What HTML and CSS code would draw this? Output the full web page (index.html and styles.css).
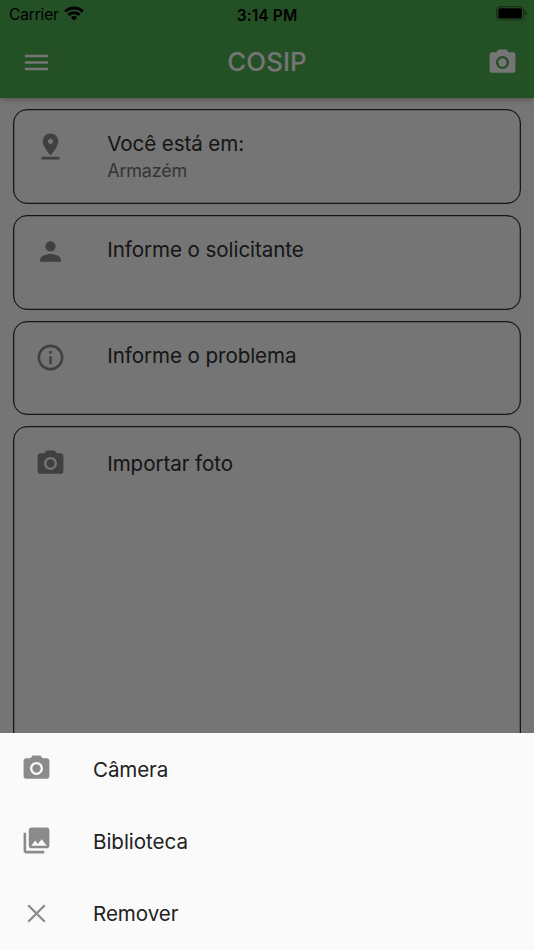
FILE: index.html
```html
<!DOCTYPE html>
<html lang="pt-BR">
<head>
<meta charset="utf-8">
<title>COSIP</title>
<link rel="stylesheet" href="styles.css">
</head>
<body>
<svg class="defs" aria-hidden="true">
  <symbol id="camera" viewBox="0 0 24 24"><circle cx="12" cy="12" r="3.2"/><path d="M9 2L7.17 4H4c-1.1 0-2 .9-2 2v12c0 1.1.9 2 2 2h16c1.1 0 2-.9 2-2V6c0-1.1-.9-2-2-2h-3.17L15 2H9zm3 15c-2.76 0-5-2.24-5-5s2.24-5 5-5 5 2.24 5 5-2.24 5-5 5z"/></symbol>
</svg>
<div class="app">
  <header class="top">
    <div class="status">
      <span class="carrier">Carrier
        <svg class="wifi" viewBox="0 0 20 15"><g fill="none" stroke="currentColor" stroke-width="2.9"><path d="M1.2 5.6a12.6 12.6 0 0 1 17.6 0"/><path d="M4.4 9a8 8 0 0 1 11.2 0"/></g><path d="M10 14.6l-3.2-3.2a4.6 4.6 0 0 1 6.4 0z"/></svg>
      </span>
      <span class="time">3:14 PM</span>
      <svg class="battery" viewBox="0 0 32 15"><rect x=".6" y=".6" width="27" height="13.4" rx="3.8" fill="none" stroke="currentColor" stroke-width="1.2" opacity=".42"/><rect x="2.3" y="2.2" width="23.6" height="10.2" rx="2"/><path d="M29.2 5v4.6c2-.7 2-3.9 0-4.6z" opacity=".5"/></svg>
    </div>
    <div class="bar">
      <svg class="icon" viewBox="0 0 24 24"><path d="M3 18h18v-2H3v2zm0-5h18v-2H3v2zm0-7v2h18V6H3z"/></svg>
      <h1 class="title">COSIP</h1>
      <svg class="icon"><use href="#camera"/></svg>
    </div>
  </header>
  <main class="cards">
    <section class="card place">
      <svg class="icon" viewBox="0 0 24 24"><path d="M18 8c0-3.31-2.69-6-6-6S6 4.69 6 8c0 4.5 6 11 6 11s6-6.5 6-11zm-8 0c0-1.1.9-2 2-2s2 .9 2 2-.89 2-2 2c-1.1 0-2-.9-2-2zM5 20v2h14v-2H5z"/></svg>
      <div class="text"><p class="label">Você está em:</p><p class="sub">Armazém</p></div>
    </section>
    <section class="card">
      <svg class="icon" viewBox="0 0 24 24"><path d="M12 12c2.21 0 4-1.79 4-4s-1.79-4-4-4-4 1.79-4 4 1.79 4 4 4zm0 2c-2.67 0-8 1.34-8 4v2h16v-2c0-2.66-5.33-4-8-4z"/></svg>
      <div class="text"><p class="label">Informe o solicitante</p></div>
    </section>
    <section class="card">
      <svg class="icon" viewBox="0 0 24 24"><path d="M11 17h2v-6h-2v6zm1-15C6.48 2 2 6.48 2 12s4.48 10 10 10 10-4.48 10-10S17.52 2 12 2zm0 18c-4.41 0-8-3.59-8-8s3.59-8 8-8 8 3.59 8 8-3.59 8-8 8zM11 9h2V7h-2v2z"/></svg>
      <div class="text"><p class="label">Informe o problema</p></div>
    </section>
    <section class="card photo">
      <svg class="icon"><use href="#camera"/></svg>
      <div class="text"><p class="label">Importar foto</p></div>
    </section>
  </main>
  <div class="scrim"></div>
  <nav class="sheet">
    <div class="option"><svg class="icon"><use href="#camera"/></svg><span>Câmera</span></div>
    <div class="option"><svg class="icon" viewBox="0 0 24 24"><path d="M22 16V4c0-1.1-.9-2-2-2H8c-1.1 0-2 .9-2 2v12c0 1.1.9 2 2 2h12c1.1 0 2-.9 2-2zm-11-4l2.03 2.71L16 11l4 5H8l3-4zM2 6v14c0 1.1.9 2 2 2h14v-2H4V6H2z"/></svg><span>Biblioteca</span></div>
    <div class="option"><svg class="icon" viewBox="0 0 24 24"><path d="M5.6 5.6L18.400 18.400M18.400 5.600L5.600 18.400" fill="none" stroke="currentColor" stroke-width="1.800"/></svg><span>Remover</span></div>
  </nav>
</div>
</body>
</html>
```
FILE: styles.css
```css
* { box-sizing: border-box; }
body { margin: 0; font-family: Inter, Roboto, sans-serif; }
h1, p { margin: 0; }
svg { display: block; fill: currentColor; }
.defs { position: absolute; width: 0; height: 0; }
.app { position: relative; width: 534px; height: 950px; overflow: hidden; background: #fefefe; display: flex; flex-direction: column; }
.icon { width: 31px; height: 31px; flex: none; }

.top { height: 98px; flex: none; background: #4faf52; box-shadow: 0 2px 5px rgba(0, 0, 0, .25); }
.status { height: 26px; display: grid; grid-template-columns: 1fr auto 1fr; align-items: center; padding: 2px 7px 0 9px; font-size: 15.5px; line-height: 24px; }
.carrier { display: flex; align-items: center; gap: 5.5px; letter-spacing: -.15px; padding-top: 1px; }
.wifi { width: 20px; height: 15px; margin-top: -4px; }
.time { font-weight: 600; letter-spacing: .1px; transform: translate(-1px, .5px); }
.battery { width: 32px; height: 15px; justify-self: end; margin: -2px -.7px 0 0; }
.bar { height: 72px; display: grid; grid-template-columns: 31px 1fr 31px; align-items: center; padding: 0 16px 0 21px; color: #fff; }
.title { font-size: 25.8px; font-weight: 500; line-height: 32px; letter-spacing: .1px; text-align: center; padding-right: 5px; }

.cards { padding: 11px 13px 0; display: flex; flex-direction: column; gap: 11px; }
.card { height: 94.8px; flex: none; display: flex; gap: 42px; padding: 20.5px 21px 0; border: 1px solid #303030; box-shadow: inset 0 0 0 .3px #303030; border-radius: 14px; color: #303030; }
.card .icon { color: #8b8b8b; margin-left: -.3px; }
.photo { height: 500px; padding-top: 21px; }
.label { font-size: 20.6px; line-height: 28px; letter-spacing: -.08px; margin: 0 0 0 -.5px; }
.place .label { letter-spacing: -.1px; margin-top: -1px; }
.sub { font-size: 18px; line-height: 25px; letter-spacing: -.2px; margin-left: -.5px; color: #757575; }
.photo .label { padding-top: 2px; }

.scrim { position: absolute; inset: 0; background: rgba(0, 0, 0, .54); }
.sheet { position: absolute; left: 0; right: 0; bottom: 0; height: 217px; background: #fafafa; color: #222; }
.option { height: 72.3px; display: flex; align-items: center; gap: 41.3px; padding-left: 20.7px; font-size: 20.6px; letter-spacing: -.05px; }
.option:first-child span { letter-spacing: -.15px; }
.option .icon { color: #8b8b8b; margin-top: -1px; }
```
